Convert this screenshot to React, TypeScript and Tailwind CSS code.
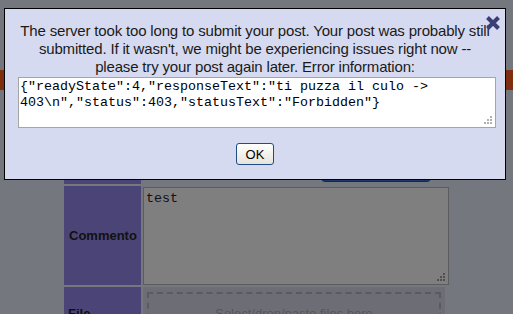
import React from "react";

const Grip = ({ color }: { color: string }) => (
  <svg width="10" height="10" viewBox="0 0 10 10" className="absolute right-[2px] bottom-[2px]">
    {[
      [7, 1],
      [4, 4],
      [7, 4],
      [1, 7],
      [4, 7],
      [7, 7],
    ].map(([x, y], i) => (
      <rect key={i} x={x} y={y} width="2" height="2" fill={color} />
    ))}
  </svg>
);

export default function App() {
  return (
    <div className="relative w-[513px] h-[314px] overflow-hidden bg-[#75777f] font-['Liberation_Sans',Arial,sans-serif]">
      {/* page beneath */}
      <div className="flex flex-col">
        <div className="h-[70px]" />
        <div className="h-[20px] bg-[#7e2d0e]" />
        <div className="h-[70px]" />
        {/* previous row */}
        <div className="flex ml-[64px] gap-[2px] h-[24px]">
          <div className="w-[77px] bg-[#4b4577]" />
          <div className="w-[306px] flex">
            <div className="ml-[178px] w-[110px] h-[22px] rounded-[4px] bg-[#1d3664] border border-[#132a52]" />
          </div>
        </div>
        {/* Commento row */}
        <div className="flex ml-[64px] gap-[2px] mt-[2px] h-[99px]">
          <div className="w-[77px] bg-[#4b4577] flex items-center pl-[5px] text-[13px] font-bold text-[#111]">
            Commento
          </div>
          <div className="w-[306px] pt-[1px]">
            <div className="relative h-[98px] bg-[#7f7f7f] border border-[#5c5c5c] px-[2px] pt-[3px] font-['Liberation_Mono',monospace] text-[13.333px] leading-[16px] text-[#111]">
              test
              <Grip color="#505050" />
            </div>
          </div>
        </div>
        {/* File row */}
        <div className="flex ml-[64px] gap-[2px] mt-[2px] h-[60px]">
          <div className="w-[77px] bg-[#4b4577] pl-[4px] pt-[17px] text-[13px] font-bold text-[#111]">
            File
          </div>
          <div className="w-[302px] bg-[#6d6e75] pl-[4px] pr-[4px] pt-[5px]">
            <div className="h-[60px] border-2 border-dashed border-[#5a5b61] pt-[10px] text-center text-[13px] text-[#55565c]">
              Select/drop/paste files here
            </div>
          </div>
        </div>
      </div>

      {/* dialog overlay */}
      <div className="absolute left-[4px] top-[8px] w-[502px] h-[172px] bg-[#d6daf0] border border-black flex flex-col items-center">
        <div className="w-full px-[15px] pt-[13px] text-center text-[15px] tracking-[-0.17px] leading-[18px] text-[#1a1a1a]">
          The server took too long to submit your post. Your post was probably still submitted. If it wasn't, we might be experiencing issues right now -- please try your post again later. Error information:
        </div>
        <div className="relative self-start ml-[13px] mt-[1px] w-[478px] h-[51px] bg-white border border-[#a5a5a5] pl-[1px] pt-[1px] font-['Liberation_Mono',monospace] text-[13.333px] leading-[16px] text-black break-words">
          {'{"readyState":4,"responseText":"ti puzza il culo -> 403\\n","status":403,"statusText":"Forbidden"}'}
          <Grip color="#b0b0b0" />
        </div>
        <button className="mt-[15px] w-[38px] h-[22px] rounded-[3px] border border-[#1f4c88] bg-gradient-to-b from-white to-[#e6e4da] text-[13px] text-black leading-none flex items-center justify-center">
          OK
        </button>
        <svg
          width="16"
          height="16"
          viewBox="0 0 16 16"
          className="absolute right-[4px] top-[6px]"
        >
          <path d="M2.5 2.5 L13.5 13.5 M13.5 2.5 L2.5 13.5" stroke="#3b3e76" strokeWidth="4" strokeLinecap="butt" />
        </svg>
      </div>
    </div>
  );
}
